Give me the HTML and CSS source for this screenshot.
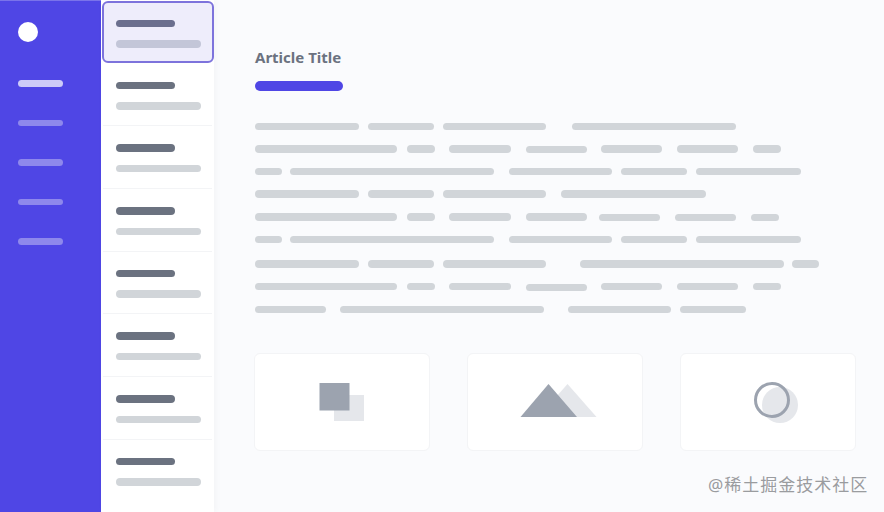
FILE: index.html
```html
<!DOCTYPE html>
<html lang="en">
<head>
  <meta charset="UTF-8" />
  <title>Article</title>
  <link rel="stylesheet" href="styles.css">
</head>
<body>
  <div class="layout">
    <nav class="sidebar">
      <div class="logo"></div>
      <div class="nav-item active"></div>
      <div class="nav-item"></div>
      <div class="nav-item"></div>
      <div class="nav-item"></div>
      <div class="nav-item"></div>
    </nav>

    <aside class="list">
      <div class="list-item selected"><div class="item-title"></div><div class="item-sub"></div></div>
      <div class="list-item"><div class="item-title"></div><div class="item-sub"></div></div>
      <div class="list-item"><div class="item-title"></div><div class="item-sub"></div></div>
      <div class="list-item"><div class="item-title"></div><div class="item-sub"></div></div>
      <div class="list-item"><div class="item-title"></div><div class="item-sub"></div></div>
      <div class="list-item"><div class="item-title"></div><div class="item-sub"></div></div>
      <div class="list-item"><div class="item-title"></div><div class="item-sub"></div></div>
      <div class="list-item"><div class="item-title"></div><div class="item-sub"></div></div>
    </aside>

    <main class="content">
      <h1>Article Title</h1>
      <div class="title-bar"></div>

      <div class="text">
        <div class="line"><i class="w104"></i><i class="w66 ml9"></i><i class="w103 ml9"></i><i class="w164 ml26"></i></div>
        <div class="line"><i class="w142"></i><i class="w28 ml10"></i><i class="w62 ml14"></i><i class="w61 ml15 low"></i><i class="w61 ml14"></i><i class="w61 ml15"></i><i class="w28 ml15"></i></div>
        <div class="line"><i class="w27"></i><i class="w204 ml8"></i><i class="w103 ml15"></i><i class="w66 ml9"></i><i class="w105 ml9"></i></div>
        <div class="line"><i class="w104"></i><i class="w66 ml9"></i><i class="w103 ml9"></i><i class="w145 ml15"></i></div>
        <div class="line"><i class="w142"></i><i class="w28 ml10"></i><i class="w62 ml14"></i><i class="w61 ml15"></i><i class="w61 ml12 low"></i><i class="w61 ml15 low"></i><i class="w28 ml15 low"></i></div>
        <div class="line"><i class="w27"></i><i class="w204 ml8"></i><i class="w103 ml15"></i><i class="w66 ml9"></i><i class="w105 ml9"></i></div>
        <div class="line para"><i class="w104"></i><i class="w66 ml9"></i><i class="w103 ml9"></i><i class="w204 ml34"></i><i class="w27 ml8"></i></div>
        <div class="line"><i class="w142"></i><i class="w28 ml10"></i><i class="w62 ml14"></i><i class="w61 ml15 low"></i><i class="w61 ml14"></i><i class="w61 ml15"></i><i class="w28 ml15"></i></div>
        <div class="line"><i class="w71"></i><i class="w204 ml14"></i><i class="w103 ml24"></i><i class="w66 ml9"></i></div>
      </div>

      <div class="cards">
        <div class="card">
          <svg width="46" height="40" viewBox="0 0 46 40">
            <rect x="15" y="13" width="30" height="26" fill="#e5e7eb" />
            <rect x="0.5" y="1" width="30" height="27.5" fill="#9ca3af" />
          </svg>
        </div>
        <div class="card">
          <svg width="84" height="36" viewBox="0 0 84 36">
            <polygon points="54.5,0 83.5,33 25.5,33" fill="#e5e7eb" />
            <polygon points="35.5,0 64,33 7.5,33" fill="#9ca3af" />
          </svg>
        </div>
        <div class="card">
          <svg width="60" height="48" viewBox="0 0 60 48">
            <circle cx="42" cy="27" r="18" fill="#e5e7eb" />
            <circle cx="34" cy="22" r="16.5" fill="none" stroke="#9ca3af" stroke-width="3" />
          </svg>
        </div>
      </div>
    </main>
  </div>

  <div class="watermark">@稀土掘金技术社区</div>
</body>
</html>
```

FILE: styles.css
```css
:root {
  --primary: #4f46e5;
  --bar: #d1d5d9;
  --dark-bar: #6b7280;
  --icon: #9ca3af;
  --line: #f3f4f6;
}

html, body {
  margin: 0;
  padding: 0;
  height: 100%;
}

body {
  background-color: #fafbfd;
  font-family: 'Noto Sans', 'Noto Sans CJK SC', sans-serif;
  overflow: hidden;
}

.layout {
  display: flex;
  height: 512px;
}

/* sidebar */
.sidebar {
  width: 101px;
  flex-shrink: 0;
  background-color: var(--primary);
  box-shadow: inset 0 1px 0 #7a73ea;
  padding: 22px 18px 0;
  box-sizing: border-box;
}

.logo {
  width: 20px;
  height: 20px;
  border-radius: 50%;
  background-color: #fff;
  margin-bottom: 38px;
}

.nav-item {
  width: 45px;
  height: 6.5px;
  border-radius: 4px;
  background-color: #8e88ec;
  margin-bottom: 33px;
}

.nav-item.active {
  background-color: #cdcbf8;
}

/* list column */
.list {
  width: 113px;
  flex-shrink: 0;
  padding-top: 1px;
  background-color: #fff;
  box-shadow: 2px 0 6px rgba(0, 0, 0, 0.03);
}

.list-item {
  height: 62.7px;
  box-sizing: border-box;
  padding: 18px 11px 0 13px;
  margin: 0 2px;
  border-bottom: 1px solid var(--line);
}

.list-item.selected {
  height: 62px;
  margin: 0 0 0.7px 1px;
  padding: 16.5px 11px 0 12px;
  background-color: #eeedfb;
  border: 2px solid #7d73dc;
  border-radius: 6px;
}

.list-item:last-child {
  border-bottom: none;
}

.item-title {
  width: 59px;
  height: 7.5px;
  border-radius: 4px;
  background-color: var(--dark-bar);
}

.list-item.selected .item-title {
  background-color: #6b6f8e;
}

.item-sub {
  width: 85px;
  height: 7.5px;
  border-radius: 4px;
  margin-top: 13px;
  background-color: var(--bar);
}

.list-item.selected .item-sub {
  background-color: #c3c6d8;
}

/* main content */
.content {
  flex: 1;
  padding: 47px 28px 0 41px;
}

h1 {
  margin: 0;
  font-size: 15px;
  line-height: 21px;
  font-weight: 700;
  color: var(--dark-bar);
}

.title-bar {
  width: 88px;
  height: 10px;
  margin-top: 13px;
  border-radius: 5px;
  background-color: var(--primary);
}

.text {
  display: flex;
  flex-direction: column;
  gap: 15.17px;
  margin-top: 31.5px;
}

.line {
  display: flex;
  height: 7.5px;
}

.line.para {
  margin-top: 1.8px;
}

.line i {
  display: block;
  height: 7.5px;
  border-radius: 4px;
  background-color: var(--bar);
}

.line i.low { margin-top: 0.7px; }

.w27 { width: 27px; }
.w28 { width: 28px; }
.w61 { width: 61px; }
.w62 { width: 62px; }
.w66 { width: 66px; }
.w71 { width: 71px; }
.w103 { width: 103px; }
.w104 { width: 104px; }
.w105 { width: 105px; }
.w142 { width: 142px; }
.w145 { width: 145px; }
.w164 { width: 164px; }
.w204 { width: 204px; }

.ml8 { margin-left: 8px; }
.ml9 { margin-left: 9px; }
.ml10 { margin-left: 10px; }
.ml12 { margin-left: 12px; }
.ml14 { margin-left: 14px; }
.ml15 { margin-left: 15px; }
.ml24 { margin-left: 24px; }
.ml26 { margin-left: 26px; }
.ml34 { margin-left: 34px; }

.cards {
  display: grid;
  grid-template-columns: repeat(3, 175.5px);
  column-gap: 37.5px;
  margin-top: 40px;
  margin-left: -1px;
}

.card {
  height: 98px;
  box-sizing: border-box;
  display: flex;
  align-items: center;
  justify-content: center;
  background-color: #fff;
  border: 1px solid var(--line);
  border-radius: 6px;
}

.watermark {
  position: absolute;
  left: 708px;
  top: 472px;
  font-size: 17px;
  line-height: 26px;
  letter-spacing: 1px;
  color: #9a9c9f;
  white-space: nowrap;
}
```
